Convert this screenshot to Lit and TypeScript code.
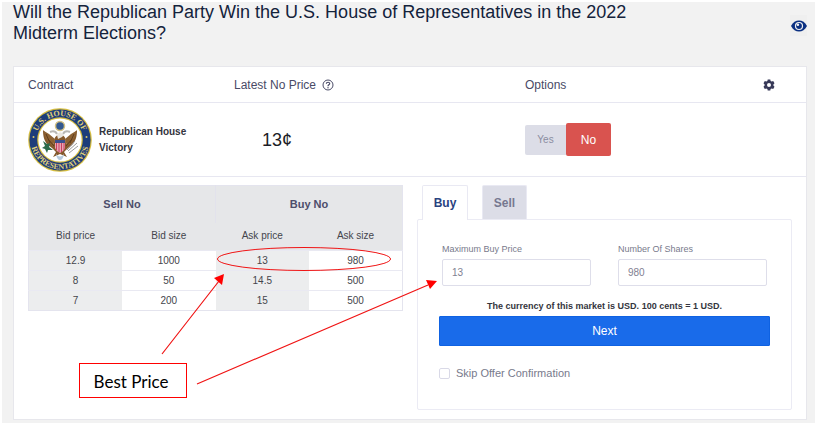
import { LitElement, html, css, svg } from "lit";
import { customElement, state } from "lit/decorators.js";

const ORDERS = [
  ["12.9", "1000", "13", "980"],
  ["8", "50", "14.5", "500"],
  ["7", "200", "15", "500"],
];

@customElement("house-seal")
class HouseSeal extends LitElement {
  static styles = css`
    :host { display: block; }
    .seal { display: block; width: 64px; height: 64px; }
    .ring { font: bold 8px "Liberation Serif", serif; fill: #e0cf78; }
  `;
  render() {
    return html`<svg class="seal" viewBox="0 0 64 64" role="img" aria-label="U.S. House of Representatives">
      <defs>
        <path id="upper" d="M8.500 38 A24.200 24.200 0 1 1 55.500 38" />
        <path id="lower" d="M2.700 32 A29.300 29.300 0 1 0 61.300 32" />
      </defs>
      <circle cx="32" cy="32" r="31.800" fill="#d6bd3e" />
      <circle cx="32" cy="32" r="30.600" fill="#1d3d7a" />
      <circle cx="32" cy="32" r="22.800" fill="#d6bd3e" />
      <circle cx="32" cy="32" r="21.600" fill="#fff" />
      <text class="ring" text-anchor="middle"><textPath href="#upper" startOffset="50%">U.S. HOUSE OF</textPath></text>
      <text class="ring" text-anchor="middle"><textPath href="#lower" startOffset="50%">REPRESENTATIVES</textPath></text>
      <circle cx="5.500" cy="29" r="1" fill="#d9c76a" />
      <circle cx="58.500" cy="29" r="1" fill="#d9c76a" />
      <path d="M30 27 C27 28 26 31 26 36 L22 33 17 24 15 22 C15 28 16 33 20 37 L24 40 28 44 25 49 32 46 39 49 36 44 40 40 44 37 C48 33 49 28 49 22 L47 24 42 33 38 36 C38 31 37 28 34 27 Z" fill="#85592c" />
      <path d="M16 23 C17 30 19 34 25 38 L27 31 21 26 Z M48 23 C47 30 45 34 39 38 L37 31 43 26 Z" fill="#8d6233" />
      <path d="M18 26 L22 35 M20 31 L26 38 M46 26 L42 35 M44 31 L38 38" stroke="#5e3c1c" stroke-width="1" fill="none" />
      <circle cx="32" cy="18" r="4.500" fill="#33588f" stroke="#d2c084" stroke-width="1.500" />
      <path d="M22 24 Q27 22 29 26 M42 24 Q37 22 35 26" fill="none" stroke="#b9b8b4" stroke-width="2" />
      <path d="M29 27 Q31 23 34 25 L36 27 34 29 30 31 Z" fill="#e8e5df" />
      <path d="M27 32 H37 V40 Q36 43 32 45 Q28 43 27 40 Z" fill="#e8a3b4" />
      <path d="M27 32 H37 V35 H27 Z" fill="#3b4f8c" />
      <path d="M28.500 35 V42 M31 35 V44 M33.500 35 V44 M36 35 V42" stroke="#c8405f" stroke-width="1" />
      <path d="M15 33 L19 36 22 35 21 39 25 42 20 42 19 45 17 41 14 40 17 38 Z" fill="#2c6a4b" />
      <path d="M40 43 L49 35 M41 45 L50 38 M39 42 L47 33" stroke="#9a9b9c" stroke-width="1" />
      <path d="M28 46 Q32 51 36 46 Q35 52 32 52 Q29 52 28 46" fill="#b7cbdd" />
    </svg>`;
  }
}

@customElement("app-root")
class AppRoot extends LitElement {
  @state() private skip = false;

  static styles = css`
    :host {
      display: block;
      position: relative;
      padding: 2px 4px 0 2px;
      background: #fff;
      font: 10px/16px "Liberation Sans", Arial, sans-serif;
      color: #41425a;
    }
    * { box-sizing: border-box; }
    button, input { font-family: inherit; margin: 0; }
    .page { background: #f2f2f2; padding: 0 8px 4px 11px; }
    .top { display: flex; justify-content: space-between; height: 64px; }
    h1 { margin: 0; max-width: 640px; font-size: 18px; line-height: 21px; font-weight: 400; color: #14233c; }
    .watch { width: 17px; height: 21px; margin-top: 13px; padding: 0; border: 0; background: #efefef; display: flex; align-items: center; justify-content: center; }
    .icon { display: block; }
    .card { background: #fff; border: 1px solid #e7e7ec; }
    .row { display: grid; grid-template-columns: 206fr 291fr 238fr 29px; padding: 0 14px; align-items: center; border-bottom: 1px solid #e7e7f1; }
    .head { height: 36px; font-size: 12px; color: #494a66; }
    .price-head { display: flex; align-items: center; gap: 6px; }
    .gear { width: 12px; height: 12px; padding: 0; border: 0; background: none; }
    .contract { height: 74px; }
    .name { display: flex; align-items: center; gap: 7px; font-weight: 700; color: #33343e; }
    .name span { width: 92px; }
    .price { font-size: 18px; color: #1c1d26; padding-left: 28px; }
    .options { display: flex; align-items: center; }
    .yes, .no { border: 0; padding: 0; }
    .yes { width: 41px; height: 30px; font-size: 10px; color: #8b8da1; background: #dcdde7; border-radius: 2px 0 0 2px; }
    .no { width: 45px; height: 33px; font-size: 12px; color: #fff; background: #d9534f; border-radius: 2px; }
    .body { display: grid; grid-template-columns: 1fr 1fr; gap: 14px; padding: 8px 14px 9px; align-items: start; }
    table { width: 100%; border-collapse: collapse; table-layout: fixed; text-align: center; border: 1px solid #e4e4ee; color: #44454c; }
    th, td { padding: 0; font-weight: 400; }
    th { background: #e6e7e9; }
    .side th { height: 37px; font-size: 11px; font-weight: 700; color: #4d4e6b; }
    .side th + th { border-left: 1px solid #e2e2ec; }
    .cols th { height: 28px; }
    td { height: 20px; border-top: 1px solid #e9e9f2; }
    td:nth-child(odd) { background: #ecedee; }
    .tabs { display: flex; gap: 14px; padding-left: 5px; }
    .tab { height: 34px; width: 45px; padding: 0; font-size: 12px; font-weight: 700; border: 1px solid #e9e9f3; border-bottom: 0; border-radius: 2px 2px 0 0; background: #dcdde7; color: #767890; }
    .tab.active { position: relative; width: 46px; height: 35px; margin-bottom: -1px; background: #fff; color: #29427f; }
    .form { border: 1px solid #ebebf4; border-radius: 2px; padding: 21px 21px 28px; }
    .fields { display: grid; grid-template-columns: 1fr 1fr; gap: 27px; padding: 0 3px; }
    .field label { display: block; font-size: 9px; color: #787a8c; }
    .field input { display: block; width: 100%; height: 27px; margin-top: 2px; padding: 0 9px; border: 1px solid #dedeea; border-radius: 2px; font-size: 10px; color: #7f8192; outline: 0; background: #fff; }
    .note { margin: 12px 0 2px; text-align: center; font-size: 9px; font-weight: 700; color: #34353d; }
    .next { display: block; width: 100%; height: 30px; border: 1px solid #0f62e2; border-radius: 1px; padding: 0; background: #196bea; color: #fff; font-size: 12px; }
    .skip { display: flex; align-items: center; gap: 6px; margin-top: 19px; font-size: 11px; color: #787a8c; }
    .skip input { appearance: none; width: 11px; height: 11px; border: 1px solid #d9d9e7; border-radius: 2px; background: #fff; }
    .skip input:checked { background: #196bea; }
    .notes { position: absolute; left: 79px; top: 240px; width: 365px; height: 160px; pointer-events: none; }
    .callout { position: absolute; left: 79px; top: 363px; width: 108px; height: 35px; border: 1px solid #f00; background: #fff; color: #000; font: 17px/35px Lato, Carlito, sans-serif; text-align: center; padding-right: 4px; }
  `;

  private get eye() {
    return svg`<svg class="icon" width="16" height="12" viewBox="0 0 16 12" aria-hidden="true">
      <path d="M0 6 C2 2.300 4.800 .500 8 .500 S14 2.300 16 6 C14 9.700 11.200 11.500 8 11.500 S2 9.700 0 6 Z" fill="#0b3082" />
      <circle cx="8" cy="6" r="4.100" fill="#f2f2f2" /><circle cx="8" cy="6" r="2.900" fill="#0b3082" />
      <circle cx="6.900" cy="4.800" r="1.300" fill="#f2f2f2" /></svg>`;
  }

  private get cog() {
    return svg`<svg class="icon" width="12" height="12" viewBox="0 0 12 12" aria-hidden="true">
      <path fill="#373958" fill-rule="evenodd" d="M4.700 0.500 H7.300 L7.600 2 L8.700 2.600 L10.200 2.100 L11.500 4.300 L10.400 5.400 V6.600 L11.500 7.700 L10.200 9.900 L8.700 9.400 L7.600 10 L7.300 11.500 H4.700 L4.400 10 L3.300 9.400 L1.800 9.900 L.5 7.700 L1.600 6.600 V5.400 L.5 4.300 L1.800 2.100 L3.300 2.600 L4.400 2 Z M6 4 A2 2 0 1 0 6 8 A2 2 0 1 0 6 4 Z" /></svg>`;
  }

  render() {
    return html`
      <main class="page">
        <header class="top">
          <h1>Will the Republican Party Win the U.S. House of Representatives in the 2022 Midterm Elections?</h1>
          <button class="watch" aria-label="Watch market">${this.eye}</button>
        </header>
        <section class="card">
          <div class="row head">
            <span>Contract</span>
            <span class="price-head">Latest No Price
              <svg class="icon" width="12" height="12" viewBox="0 0 12 12" aria-hidden="true">
                <circle cx="6" cy="6" r="5" fill="none" stroke="#494a66" />
                <path d="M4.300 4.800 C4.400 2.700 7.800 2.800 7.700 4.700 C7.600 5.900 6 5.800 6 7.200" fill="none" stroke="#494a66" stroke-width="1.200" />
                <circle cx="6" cy="8.700" r=".7" fill="#494a66" />
              </svg>
            </span>
            <span>Options</span>
            <button class="gear" aria-label="Settings">${this.cog}</button>
          </div>
          <div class="row contract">
            <div class="name"><house-seal></house-seal><span>Republican House Victory</span></div>
            <div class="price">13¢</div>
            <div class="options"><button class="yes">Yes</button><button class="no">No</button></div>
          </div>
          <div class="body">
            <table>
              <thead>
                <tr class="side"><th colspan="2">Sell No</th><th colspan="2">Buy No</th></tr>
                <tr class="cols"><th>Bid price</th><th>Bid size</th><th>Ask price</th><th>Ask size</th></tr>
              </thead>
              <tbody>
                ${ORDERS.map((r) => html`<tr>${r.map((c) => html`<td>${c}</td>`)}</tr>`)}
              </tbody>
            </table>
            <div>
              <div class="tabs" role="tablist">
                <button class="tab active" role="tab" aria-selected="true">Buy</button>
                <button class="tab" role="tab" aria-selected="false">Sell</button>
              </div>
              <form class="form" @submit=${(e: Event) => e.preventDefault()}>
                <div class="fields">
                  <div class="field"><label for="price">Maximum Buy Price</label><input id="price" type="text" value="13" /></div>
                  <div class="field"><label for="shares">Number Of Shares</label><input id="shares" type="text" value="980" /></div>
                </div>
                <p class="note">The currency of this market is USD. 100 cents = 1 USD.</p>
                <button class="next">Next</button>
                <label class="skip"><input type="checkbox" .checked=${this.skip}
                  @change=${(e: Event) => (this.skip = (e.target as HTMLInputElement).checked)} />Skip Offer Confirmation</label>
              </form>
            </div>
          </div>
        </section>
      </main>
      <svg class="notes" viewBox="79 240 365 160" aria-hidden="true">
        <g fill="none" stroke="#f01414">
          <ellipse cx="304" cy="259" rx="86.500" ry="11.500" />
          <path d="M162 354 L219 281 M197 384 L428 285" stroke-width="1.200" />
        </g>
        <path d="M224 274 L222 285 L214 278 Z M437 281 L430 289 L426 280 Z" fill="#f00" />
      </svg>
      <div class="callout">Best Price</div>
    `;
  }
}
